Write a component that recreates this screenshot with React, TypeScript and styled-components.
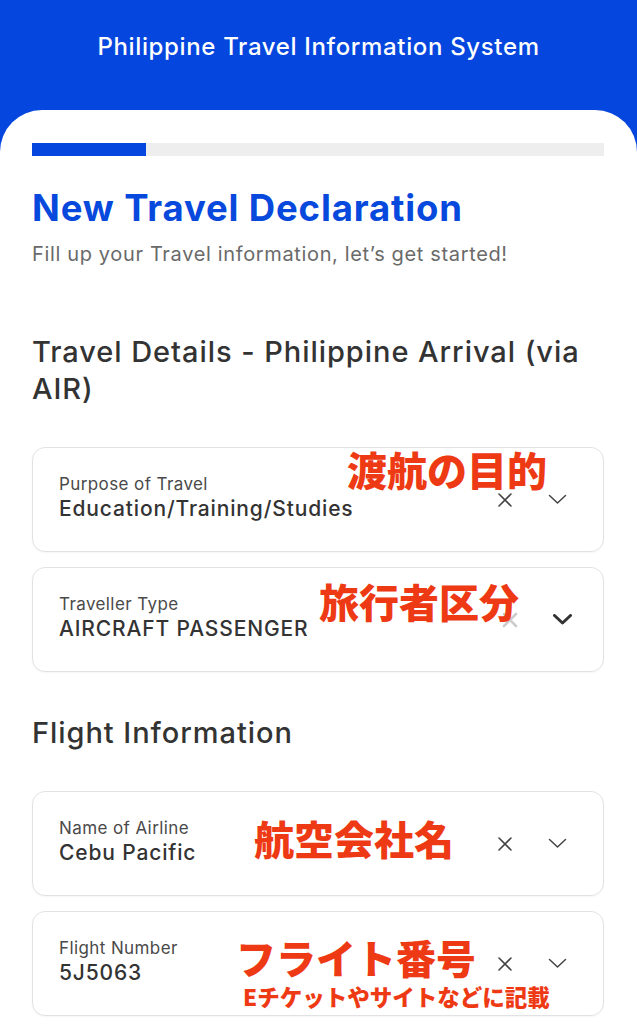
import React from "react"
import styled, { createGlobalStyle } from "styled-components"

const GlobalStyle = createGlobalStyle`
  body {
    margin: 0;
    background: #ffffff;
    font-family: Inter, "Noto Sans", sans-serif;
  }
`

const Page = styled.div`
  display: flex;
  flex-direction: column;
  min-height: 100vh;
  background: #0446de;
`

const Header = styled.header`
  height: 110px;
  display: flex;
  justify-content: center;
  padding-top: 32px;
  box-sizing: border-box;
  color: #ffffff;
  font-size: 24px;
  line-height: 30px;
  font-weight: 500;
  letter-spacing: 0.65px;
`

const Card = styled.main`
  flex: 1;
  background: #ffffff;
  border-radius: 42px 42px 0 0;
  padding: 33px 33px 0 32px;
`

const Progress = styled.div`
  height: 13px;
  background: #eeeeee;
`

const ProgressFill = styled.div`
  height: 100%;
  background: #0446de;
`

const Title = styled.h1`
  margin: 31px 0 0;
  font-size: 36.5px;
  line-height: 42px;
  font-weight: 700;
  color: #0749dc;
  letter-spacing: 0.85px;
`

const Subtitle = styled.p`
  margin: 12px 0 0;
  font-size: 20px;
  line-height: 26px;
  color: #6a6a6a;
  letter-spacing: 0.65px;
`

const SectionTitle = styled.h2<{ $top: number }>`
  margin: ${(p) => p.$top}px 0 0;
  font-size: 29px;
  line-height: 37px;
  font-weight: 500;
  color: #333333;
  letter-spacing: 0.95px;
`

const FieldList = styled.div<{ $top: number }>`
  display: flex;
  flex-direction: column;
  gap: 15px;
  margin-top: ${(p) => p.$top}px;
`

const FieldBox = styled.div`
  position: relative;
  display: flex;
  align-items: center;
  height: 105px;
  box-sizing: border-box;
  padding: 0 36px 4px 26px;
  border: 1px solid #e2e2e2;
  border-radius: 13px;
  box-shadow: 0 1px 2px rgba(0, 0, 0, 0.04);
`

const FieldText = styled.div`
  flex: 1;
  display: flex;
  flex-direction: column;
`

const Label = styled.span`
  font-size: 17px;
  line-height: 21px;
  color: #4a4a4a;
  letter-spacing: 0.4px;
`

const Value = styled.span`
  font-size: 21px;
  line-height: 27px;
  font-weight: 500;
  color: #333333;
  letter-spacing: 0.85px;
`

const Icons = styled.div`
  display: flex;
  align-items: center;
  gap: 35px;
  padding-top: 4px;
`

const Chevron = styled.svg<{ $bold?: boolean }>`
  margin-right: ${(p) => (p.$bold ? "-5px" : "0")};
`

const Note = styled.span<{ $left: number; $top: number; $size: number }>`
  position: absolute;
  left: ${(p) => p.$left}px;
  top: ${(p) => p.$top}px;
  font-family: "Noto Sans CJK JP", sans-serif;
  font-size: ${(p) => p.$size}px;
  line-height: 1;
  font-weight: 900;
  color: #ee3a14;
  white-space: nowrap;
`

type NoteSpec = { text: string; left: number; top: number; size: number }

type FieldProps = {
  label: string
  value: string
  notes: NoteSpec[]
  muted?: boolean
}

const ClearIcon = ({ muted }: { muted?: boolean }) => (
  <svg width="16" height="16" viewBox="0 0 16 16">
    <path
      d="M2 2 L14 14 M14 2 L2 14"
      stroke={muted ? "#cccccc" : "#444444"}
      strokeWidth={muted ? 2.6 : 1.6}
      strokeLinecap="round"
      fill="none"
    />
  </svg>
)

const ChevronIcon = ({ bold }: { bold?: boolean }) => (
  <Chevron $bold={bold} width="19" height="11" viewBox="0 0 19 11">
    <path
      d="M1.5 1.5 L9.5 9 L17.5 1.5"
      stroke={bold ? "#333333" : "#444444"}
      strokeWidth={bold ? 3 : 1.5}
      strokeLinecap="round"
      strokeLinejoin="round"
      fill="none"
    />
  </Chevron>
)

const Field = ({ label, value, notes, muted }: FieldProps) => (
  <FieldBox>
    <FieldText>
      <Label>{label}</Label>
      <Value>{value}</Value>
    </FieldText>
    <Icons>
      <ClearIcon muted={muted} />
      <ChevronIcon bold={muted} />
    </Icons>
    {notes.map((n) => (
      <Note key={n.text} $left={n.left} $top={n.top} $size={n.size}>
        {n.text}
      </Note>
    ))}
  </FieldBox>
)

const travelFields: FieldProps[] = [
  {
    label: "Purpose of Travel",
    value: "Education/Training/Studies",
    notes: [{ text: "渡航の目的", left: 314, top: 1, size: 40 }],
  },
  {
    label: "Traveller Type",
    value: "AIRCRAFT PASSENGER",
    notes: [{ text: "旅行者区分", left: 286, top: 13, size: 40 }],
    muted: true,
  },
]

const flightFields: FieldProps[] = [
  {
    label: "Name of Airline",
    value: "Cebu Pacific",
    notes: [{ text: "航空会社名", left: 221, top: 26, size: 40 }],
  },
  {
    label: "Flight Number",
    value: "5J5063",
    notes: [
      { text: "フライト番号", left: 203, top: 25, size: 40 },
      { text: "Eチケットやサイトなどに記載", left: 210, top: 73, size: 22.5 },
    ],
  },
]

export default function App() {
  return (
    <>
      <GlobalStyle />
      <Page>
        <Header>Philippine Travel Information System</Header>
        <Card>
          <Progress>
            <ProgressFill style={{ width: "20%" }} />
          </Progress>
          <Title>New Travel Declaration</Title>
          <Subtitle>Fill up your Travel information, let’s get started!</Subtitle>
          <SectionTitle $top={66}>Travel Details - Philippine Arrival (via AIR)</SectionTitle>
          <FieldList $top={40}>
            {travelFields.map((f) => (
              <Field key={f.label} {...f} />
            ))}
          </FieldList>
          <SectionTitle $top={42}>Flight Information</SectionTitle>
          <FieldList $top={40}>
            {flightFields.map((f) => (
              <Field key={f.label} {...f} />
            ))}
          </FieldList>
        </Card>
      </Page>
    </>
  )
}
